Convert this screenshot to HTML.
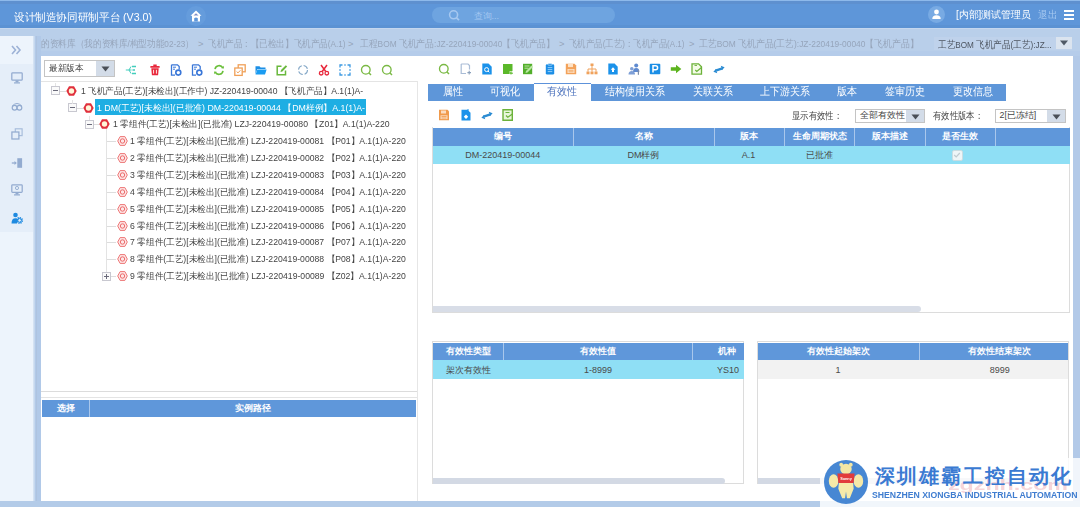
<!DOCTYPE html>
<html><head><meta charset="utf-8">
<style>
*{box-sizing:border-box;margin:0;padding:0}
html,body{width:1080px;height:507px;overflow:hidden;background:#b9cfea;font-family:"Liberation Sans",sans-serif;color:#333;position:relative}
.a{position:absolute}
.t{white-space:nowrap}
svg{position:absolute;overflow:visible;filter:blur(0.2px)}
</style></head><body>
<div class="a" style="left:0px;top:0px;width:1080px;height:28px;background:#5e96d9;"></div>
<div class="a" style="left:0px;top:0px;width:1080px;height:1px;background:#8db9eb;"></div>
<div class="a" style="left:0px;top:1px;width:1080px;height:2.5px;background:#5e90cf;"></div>
<div class="a" style="left:0px;top:25px;width:1080px;height:3.5px;background:#5b92d3;"></div>
<div class="a" style="left:186px;top:6px;width:20px;height:20px;background:#659cdc;border-radius:50%;"></div>
<svg style="left:189px;top:9px" width="14" height="14" viewBox="0 0 14 14"><path d="M7 1.5 L12.5 6.8 L11 6.8 L11 12.5 L3 12.5 L3 6.8 L1.5 6.8 Z" fill="#ffffff"/><path d="M5.2 12.5 L5.2 9.2 Q7 7.6 8.8 9.2 L8.8 12.5 Z" fill="#5e96d9"/><path d="M4.5 6.5 L7 4.2 L9.5 6.5 Z" fill="#7f8fc8"/></svg>
<div class="a" style="left:432px;top:7px;width:183px;height:16px;background:#6ea4e0;border-radius:8px;"></div>
<svg style="left:448px;top:9px" width="13" height="13" viewBox="0 0 13 13"><circle cx="5.6" cy="5.8" r="4" fill="none" stroke="#a6c8f0" stroke-width="1.6"/><path d="M8.6 8.8 L11 11.2" stroke="#a6c8f0" stroke-width="1.7"/></svg>
<div class="a" style="left:928px;top:6px;width:17px;height:17px;background:#78aae3;border-radius:50%;"></div>
<svg style="left:930px;top:8px" width="13" height="13" viewBox="0 0 13 13"><circle cx="6.5" cy="4" r="2.4" fill="#fff"/><path d="M2.3 11 Q2.3 7.3 6.5 7.3 Q10.7 7.3 10.7 11 Z" fill="#fff"/></svg>
<div class="a" style="left:1064px;top:10.2px;width:10px;height:1.8px;background:#ffffff;"></div>
<div class="a" style="left:1064px;top:14px;width:10px;height:1.8px;background:#ffffff;"></div>
<div class="a" style="left:1064px;top:17.8px;width:10px;height:1.8px;background:#ffffff;"></div>
<div class="a" style="left:0px;top:28px;width:1080px;height:1px;background:#c4d7ef;"></div>
<div class="a" style="left:36px;top:51px;width:1044px;height:5px;background:#b5ccea;"></div>
<div class="a" style="left:41px;top:55.5px;width:1032px;height:1px;background:#bac9de;"></div>
<div class="a" style="left:0px;top:36px;width:34px;height:465px;background:#e5eef9;"></div>
<div class="a" style="left:0px;top:36px;width:34px;height:28px;background:#edf4fc;"></div>
<div class="a" style="left:0px;top:232px;width:34px;height:269px;background:#edf4fc;"></div>
<div class="a" style="left:33px;top:36px;width:1px;height:465px;background:#d4e2f3;"></div>
<div class="a" style="left:34px;top:36px;width:7px;height:465px;background:#b1c9e8;"></div>
<div class="a" style="left:34px;top:36px;width:1px;height:465px;background:#c6d8ee;"></div>
<div class="a" style="left:35.5px;top:36px;width:1px;height:465px;background:#aec3df;"></div>
<div class="a" style="left:934px;top:36.5px;width:138px;height:13px;background:#bfd2eb;"></div>
<div class="a" style="left:1056px;top:37px;width:16px;height:12px;background:#dbe4ef;"></div>
<svg style="left:1059px;top:40px" width="10" height="6" viewBox="0 0 10 6"><path d="M1 0.5 L9 0.5 L5 5.5 Z" fill="#505a66"/></svg>
<div class="a" style="left:41px;top:56px;width:1032px;height:445px;background:#ffffff;"></div>
<div class="a" style="left:1073px;top:56px;width:7px;height:445px;background:#b2c9e8;"></div>
<div class="a" style="left:0px;top:501px;width:1080px;height:6px;background:#b3cbe8;"></div>
<div class="a" style="left:44px;top:60px;width:71px;height:17px;background:#ffffff;border:1px solid #c4c4c4;"></div>
<div class="a" style="left:96px;top:61px;width:18px;height:15px;background:#d3dce8;"></div>
<svg style="left:100.5px;top:65.5px" width="9" height="6" viewBox="0 0 9 6"><path d="M0.5 0.5 L8.5 0.5 L4.5 5.5 Z" fill="#4a4f57"/></svg>
<div class="a" style="left:41px;top:81px;width:377px;height:311px;background:#ffffff;border-top:1px solid #e4e4e4;border-bottom:1px solid #dcdcdc;"></div>
<div class="a" style="left:417px;top:81px;width:1px;height:420px;background:#e6e6e6;"></div>
<div class="a" style="left:41px;top:397px;width:376px;height:1px;background:#e4e4e4;"></div>
<div class="a" style="left:42px;top:400px;width:374px;height:17px;background:#5f97da;"></div>
<div class="a" style="left:89px;top:400px;width:1px;height:17px;background:#a9c7ec;"></div>
<div class="a" style="left:94.8px;top:99.2px;width:271px;height:16.3px;background:#1eaee3;"></div>
<svg style="left:51.00px;top:86.30px" width="9" height="9" viewBox="0 0 9 9"><rect x="0.5" y="0.5" width="8" height="8" fill="#fafafa" stroke="#c8c8d0" stroke-width="1"/><path d="M2 4.5 H7" stroke="#6a6a7a" stroke-width="1"/></svg>
<div class="a" style="left:55px;top:83px;width:1px;height:3px;background:#e3e3e3"></div>
<div class="a" style="left:60px;top:91px;width:6px;height:1px;background:#dddddd"></div>
<svg style="left:66.00px;top:85.80px" width="11" height="10" viewBox="0 0 11 10"><path d="M3 0.3 L8 0.3 L10.7 5 L8 9.7 L3 9.7 L0.3 5 Z" fill="#e0303c"/><circle cx="5.5" cy="5" r="2.7" fill="#fff6d8"/></svg>
<svg style="left:67.50px;top:103.14px" width="9" height="9" viewBox="0 0 9 9"><rect x="0.5" y="0.5" width="8" height="8" fill="#fafafa" stroke="#c8c8d0" stroke-width="1"/><path d="M2 4.5 H7" stroke="#6a6a7a" stroke-width="1"/></svg>
<div class="a" style="left:72px;top:100px;width:1px;height:4px;background:#e3e3e3"></div>
<div class="a" style="left:77px;top:108px;width:6px;height:1px;background:#dddddd"></div>
<svg style="left:82.50px;top:102.64px" width="11" height="10" viewBox="0 0 11 10"><path d="M3 0.3 L8 0.3 L10.7 5 L8 9.7 L3 9.7 L0.3 5 Z" fill="#e0303c"/><circle cx="5.5" cy="5" r="2.7" fill="#fff6d8"/></svg>
<svg style="left:85.00px;top:119.98px" width="9" height="9" viewBox="0 0 9 9"><rect x="0.5" y="0.5" width="8" height="8" fill="#fafafa" stroke="#c8c8d0" stroke-width="1"/><path d="M2 4.5 H7" stroke="#6a6a7a" stroke-width="1"/></svg>
<div class="a" style="left:89px;top:116px;width:1px;height:4px;background:#e3e3e3"></div>
<div class="a" style="left:94px;top:124px;width:6px;height:1px;background:#dddddd"></div>
<svg style="left:99.10px;top:119.48px" width="11" height="10" viewBox="0 0 11 10"><path d="M3 0.3 L8 0.3 L10.7 5 L8 9.7 L3 9.7 L0.3 5 Z" fill="#e0303c"/><circle cx="5.5" cy="5" r="2.7" fill="#fff6d8"/></svg>
<div class="a" style="left:106px;top:129px;width:1px;height:143px;background:#e3e3e3"></div>
<div class="a" style="left:107px;top:141px;width:9px;height:1px;background:#dddddd"></div>
<svg style="left:116.50px;top:136.32px" width="11" height="10" viewBox="0 0 11 10"><path d="M3.1 0.6 L7.9 0.6 L10.3 5 L7.9 9.4 L3.1 9.4 L0.7 5 Z" fill="#fde6e6" stroke="#ee7777" stroke-width="1"/><circle cx="5.5" cy="5" r="2.2" fill="none" stroke="#ec6a6a" stroke-width="1"/></svg>
<div class="a" style="left:107px;top:158px;width:9px;height:1px;background:#dddddd"></div>
<svg style="left:116.50px;top:153.16px" width="11" height="10" viewBox="0 0 11 10"><path d="M3.1 0.6 L7.9 0.6 L10.3 5 L7.9 9.4 L3.1 9.4 L0.7 5 Z" fill="#fde6e6" stroke="#ee7777" stroke-width="1"/><circle cx="5.5" cy="5" r="2.2" fill="none" stroke="#ec6a6a" stroke-width="1"/></svg>
<div class="a" style="left:107px;top:175px;width:9px;height:1px;background:#dddddd"></div>
<svg style="left:116.50px;top:170.00px" width="11" height="10" viewBox="0 0 11 10"><path d="M3.1 0.6 L7.9 0.6 L10.3 5 L7.9 9.4 L3.1 9.4 L0.7 5 Z" fill="#fde6e6" stroke="#ee7777" stroke-width="1"/><circle cx="5.5" cy="5" r="2.2" fill="none" stroke="#ec6a6a" stroke-width="1"/></svg>
<div class="a" style="left:107px;top:192px;width:9px;height:1px;background:#dddddd"></div>
<svg style="left:116.50px;top:186.84px" width="11" height="10" viewBox="0 0 11 10"><path d="M3.1 0.6 L7.9 0.6 L10.3 5 L7.9 9.4 L3.1 9.4 L0.7 5 Z" fill="#fde6e6" stroke="#ee7777" stroke-width="1"/><circle cx="5.5" cy="5" r="2.2" fill="none" stroke="#ec6a6a" stroke-width="1"/></svg>
<div class="a" style="left:107px;top:209px;width:9px;height:1px;background:#dddddd"></div>
<svg style="left:116.50px;top:203.68px" width="11" height="10" viewBox="0 0 11 10"><path d="M3.1 0.6 L7.9 0.6 L10.3 5 L7.9 9.4 L3.1 9.4 L0.7 5 Z" fill="#fde6e6" stroke="#ee7777" stroke-width="1"/><circle cx="5.5" cy="5" r="2.2" fill="none" stroke="#ec6a6a" stroke-width="1"/></svg>
<div class="a" style="left:107px;top:226px;width:9px;height:1px;background:#dddddd"></div>
<svg style="left:116.50px;top:220.52px" width="11" height="10" viewBox="0 0 11 10"><path d="M3.1 0.6 L7.9 0.6 L10.3 5 L7.9 9.4 L3.1 9.4 L0.7 5 Z" fill="#fde6e6" stroke="#ee7777" stroke-width="1"/><circle cx="5.5" cy="5" r="2.2" fill="none" stroke="#ec6a6a" stroke-width="1"/></svg>
<div class="a" style="left:107px;top:242px;width:9px;height:1px;background:#dddddd"></div>
<svg style="left:116.50px;top:237.36px" width="11" height="10" viewBox="0 0 11 10"><path d="M3.1 0.6 L7.9 0.6 L10.3 5 L7.9 9.4 L3.1 9.4 L0.7 5 Z" fill="#fde6e6" stroke="#ee7777" stroke-width="1"/><circle cx="5.5" cy="5" r="2.2" fill="none" stroke="#ec6a6a" stroke-width="1"/></svg>
<div class="a" style="left:107px;top:259px;width:9px;height:1px;background:#dddddd"></div>
<svg style="left:116.50px;top:254.20px" width="11" height="10" viewBox="0 0 11 10"><path d="M3.1 0.6 L7.9 0.6 L10.3 5 L7.9 9.4 L3.1 9.4 L0.7 5 Z" fill="#fde6e6" stroke="#ee7777" stroke-width="1"/><circle cx="5.5" cy="5" r="2.2" fill="none" stroke="#ec6a6a" stroke-width="1"/></svg>
<svg style="left:101.50px;top:271.54px" width="9" height="9" viewBox="0 0 9 9"><rect x="0.5" y="0.5" width="8" height="8" fill="#fafafa" stroke="#c8c8d0" stroke-width="1"/><path d="M2 4.5 H7" stroke="#6a6a7a" stroke-width="1"/><path d="M4.5 2 V7" stroke="#6a6a7a" stroke-width="1"/></svg>
<div class="a" style="left:111px;top:276px;width:5px;height:1px;background:#dddddd"></div>
<svg style="left:116.50px;top:271.04px" width="11" height="10" viewBox="0 0 11 10"><path d="M3.1 0.6 L7.9 0.6 L10.3 5 L7.9 9.4 L3.1 9.4 L0.7 5 Z" fill="#fde6e6" stroke="#ee7777" stroke-width="1"/><circle cx="5.5" cy="5" r="2.2" fill="none" stroke="#ec6a6a" stroke-width="1"/></svg>
<div class="a" style="left:428px;top:84px;width:577.5px;height:17px;background:#5e96d9;"></div>
<div class="a" style="left:534px;top:82.5px;width:57px;height:18.5px;background:#ffffff;border-top:1.5px solid #5d92da;"></div>
<div class="a" style="left:855px;top:109px;width:70px;height:14px;background:#ffffff;border:1px solid #c4c4c4;"></div>
<div class="a" style="left:906px;top:110px;width:18px;height:12px;background:#d3dce8;"></div>
<svg style="left:910.5px;top:113.5px" width="9" height="6" viewBox="0 0 9 6"><path d="M0.5 0.5 L8.5 0.5 L4.5 5.5 Z" fill="#4a4f57"/></svg>
<div class="a" style="left:995px;top:109px;width:71px;height:14px;background:#ffffff;border:1px solid #c4c4c4;"></div>
<div class="a" style="left:1047px;top:110px;width:18px;height:12px;background:#d3dce8;"></div>
<svg style="left:1051.5px;top:113.5px" width="9" height="6" viewBox="0 0 9 6"><path d="M0.5 0.5 L8.5 0.5 L4.5 5.5 Z" fill="#4a4f57"/></svg>
<div class="a" style="left:432px;top:127px;width:638px;height:186px;background:#ffffff;border:1px solid #dcdcdc;border-top:none;"></div>
<div class="a" style="left:432.5px;top:128px;width:637px;height:17.5px;background:#5f97da;"></div>
<div class="a" style="left:572.8px;top:128px;width:1px;height:17.5px;background:#a9c7ec;"></div>
<div class="a" style="left:713.5px;top:128px;width:1px;height:17.5px;background:#a9c7ec;"></div>
<div class="a" style="left:784.0px;top:128px;width:1px;height:17.5px;background:#a9c7ec;"></div>
<div class="a" style="left:854.3px;top:128px;width:1px;height:17.5px;background:#a9c7ec;"></div>
<div class="a" style="left:924.7px;top:128px;width:1px;height:17.5px;background:#a9c7ec;"></div>
<div class="a" style="left:995.1px;top:128px;width:1px;height:17.5px;background:#a9c7ec;"></div>
<div class="a" style="left:432.5px;top:145.5px;width:637px;height:18px;background:#8fdff5;"></div>
<div class="a" style="left:951.5px;top:149.5px;width:11px;height:11px;background:#eef5f7;border:1px solid #c9dde2;border-radius:2px;"></div>
<svg style="left:953px;top:151px" width="8" height="8" viewBox="0 0 8 8"><path d="M1.2 4 L3.2 6 L6.8 2" fill="none" stroke="#bfcbd0" stroke-width="1.2"/></svg>
<div class="a" style="left:432.5px;top:306.3px;width:488px;height:5.7px;background:#d8dde7;border-radius:0 3px 3px 0;"></div>
<div class="a" style="left:432px;top:341px;width:312px;height:143px;background:#ffffff;border:1px solid #dcdcdc;"></div>
<div class="a" style="left:432.5px;top:342.5px;width:311px;height:17.5px;background:#5f97da;"></div>
<div class="a" style="left:503px;top:342.5px;width:1px;height:17.5px;background:#a9c7ec;"></div>
<div class="a" style="left:692.3px;top:342.5px;width:1px;height:17.5px;background:#a9c7ec;"></div>
<div class="a" style="left:432.5px;top:360px;width:311px;height:18.8px;background:#8fdff5;"></div>
<div class="a" style="left:432.5px;top:477.5px;width:292px;height:6px;background:#d3d9e4;border-radius:0 3px 3px 0;"></div>
<div class="a" style="left:757px;top:341px;width:312px;height:143px;background:#ffffff;border:1px solid #dcdcdc;"></div>
<div class="a" style="left:757.5px;top:342.5px;width:310px;height:17.5px;background:#5f97da;"></div>
<div class="a" style="left:918.7px;top:342.5px;width:1px;height:17.5px;background:#a9c7ec;"></div>
<div class="a" style="left:757.5px;top:360px;width:310px;height:18.8px;background:#f2f2f2;"></div>
<div class="a" style="left:757.5px;top:477.5px;width:311px;height:6px;background:#d3d9e4;"></div>
<svg style="left:125.30px;top:63.80px" width="12" height="12" viewBox="0 0 12 12"><path d="M0.8 6 H4 M4 6 L6 2.5 M4 6 H6.5 M4 6 L6 9.5" stroke="#43cdbd" stroke-width="1" fill="none"/><path d="M7 2.5 H11 M7.5 6 H10 M7 9.5 H11" stroke="#43cdbd" stroke-width="1.4" fill="none"/></svg>
<svg style="left:149.30px;top:63.80px" width="12" height="12" viewBox="0 0 12 12"><rect x="4.3" y="0.5" width="3.4" height="1.8" fill="#e8283c"/><rect x="1.3" y="1.9" width="9.4" height="1.9" rx="0.5" fill="#e8283c"/><path d="M2.3 4.3 H9.7 L9.1 11.3 H2.9 Z" fill="#e8283c"/><rect x="4" y="5.8" width="1.1" height="3.8" fill="#ffd6d6"/><rect x="6.9" y="5.8" width="1.1" height="3.8" fill="#ffd6d6"/></svg>
<svg style="left:170.30px;top:63.80px" width="12" height="12" viewBox="0 0 12 12"><path d="M1.5 0.8 H7.5 L9.2 2.5 V5.5 M5 11.2 H1.5 V0.8" stroke="#3a77d8" stroke-width="1.3" fill="none"/><path d="M3 3.2 H6 M3 5.2 H5" stroke="#3a77d8" stroke-width="1"/><circle cx="8.3" cy="8.6" r="2.5" fill="#fff" stroke="#3a77d8" stroke-width="1.6"/></svg>
<svg style="left:191.10px;top:63.80px" width="12" height="12" viewBox="0 0 12 12"><path d="M1.5 0.8 H7.5 L9.2 2.5 V5.5 M5 11.2 H1.5 V0.8" stroke="#3a77d8" stroke-width="1.3" fill="none"/><path d="M3 3.2 H6 M3 5.2 H5" stroke="#3a77d8" stroke-width="1"/><circle cx="8.3" cy="8.6" r="2.5" fill="#fff" stroke="#3a77d8" stroke-width="1.6"/></svg>
<svg style="left:212.70px;top:63.80px" width="12" height="12" viewBox="0 0 12 12"><path d="M2 5.2 A4.2 4.2 0 0 1 9.8 3.8" stroke="#6abf3a" stroke-width="1.6" fill="none"/><path d="M10 6.8 A4.2 4.2 0 0 1 2.2 8.2" stroke="#6abf3a" stroke-width="1.6" fill="none"/><path d="M8.3 4.3 L11 4.6 L10.6 1.8 Z M3.7 7.7 L1 7.4 L1.4 10.2 Z" fill="#6abf3a"/></svg>
<svg style="left:233.50px;top:63.80px" width="12" height="12" viewBox="0 0 12 12"><rect x="4.2" y="0.8" width="7" height="7" fill="none" stroke="#f0a058" stroke-width="1.3"/><rect x="0.8" y="4" width="7.4" height="7.4" fill="#fff" stroke="#f0a058" stroke-width="1.3"/><path d="M2.6 7.5 L4 8.9 L6.4 6.3" stroke="#f0a058" stroke-width="1" fill="none"/></svg>
<svg style="left:255.10px;top:63.80px" width="12" height="12" viewBox="0 0 12 12"><path d="M0.5 2.3 H4.5 L5.6 3.5 H10.5 V5 H2.3 L0.5 10.5 Z" fill="#1c8fe6"/><path d="M2.4 5.6 H11.6 L10 10.6 H0.6 Z" fill="#1a9cf2"/></svg>
<svg style="left:276.00px;top:63.80px" width="12" height="12" viewBox="0 0 12 12"><path d="M9.5 6.5 V10.8 H1.2 V2.2 H5.5" stroke="#69b83c" stroke-width="1.5" fill="none"/><path d="M4.5 8 L5 6 L9.8 1.2 L11.2 2.6 L6.4 7.4 Z" fill="#69b83c"/></svg>
<svg style="left:297.00px;top:63.80px" width="12" height="12" viewBox="0 0 12 12"><circle cx="6" cy="6" r="4.5" fill="none" stroke="#86a9c8" stroke-width="1.1" stroke-dasharray="5.2 1.9"/></svg>
<svg style="left:318.30px;top:63.80px" width="12" height="12" viewBox="0 0 12 12"><path d="M3 1 L7.6 7.3 M9 1 L4.4 7.3" stroke="#e8283c" stroke-width="1.5"/><circle cx="3.2" cy="9.2" r="1.8" fill="none" stroke="#e8283c" stroke-width="1.3"/><circle cx="8.8" cy="9.2" r="1.8" fill="none" stroke="#e8283c" stroke-width="1.3"/></svg>
<svg style="left:339.00px;top:63.80px" width="12" height="12" viewBox="0 0 12 12"><path d="M1 3.5 V1 H3.5 M8.5 1 H11 V3.5 M11 8.5 V11 H8.5 M3.5 11 H1 V8.5" stroke="#3d9ae2" stroke-width="1.3" fill="none"/><path d="M5 1 H7 M5 11 H7 M1 5 V7 M11 5 V7" stroke="#3d9ae2" stroke-width="1.1"/></svg>
<svg style="left:359.60px;top:63.80px" width="12" height="12" viewBox="0 0 12 12"><circle cx="5.8" cy="5.8" r="4.3" fill="none" stroke="#7ab944" stroke-width="1.35"/><path d="M8.8 8.8 L11 11" stroke="#7ab944" stroke-width="1.5"/></svg>
<svg style="left:380.80px;top:63.80px" width="12" height="12" viewBox="0 0 12 12"><circle cx="5.8" cy="5.8" r="4.3" fill="none" stroke="#7ab944" stroke-width="1.35"/><path d="M8.8 8.8 L11 11" stroke="#7ab944" stroke-width="1.5"/></svg>
<svg style="left:438.00px;top:62.70px" width="12" height="12" viewBox="0 0 12 12"><circle cx="5.8" cy="5.8" r="4.3" fill="none" stroke="#7ab944" stroke-width="1.35"/><path d="M8.8 8.8 L11 11" stroke="#7ab944" stroke-width="1.5"/></svg>
<svg style="left:459.60px;top:62.70px" width="12" height="12" viewBox="0 0 12 12"><path d="M1.2 1 H8 L9.5 2.5 V6.5 M1.2 1 V10.5 H6" stroke="#a9bcd6" stroke-width="1.2" fill="none"/><path d="M9.2 7.8 V11.5 M7.4 9.6 H11" stroke="#8aa0bb" stroke-width="1.1"/></svg>
<svg style="left:480.70px;top:62.70px" width="12" height="12" viewBox="0 0 12 12"><path d="M1.3 0.5 H7.5 L10.7 3.7 V11.5 H1.3 Z" fill="#1b92ea"/><circle cx="5.6" cy="6.6" r="2" fill="none" stroke="#fff" stroke-width="1"/><path d="M7 8 L8.3 9.3" stroke="#fff" stroke-width="1"/></svg>
<svg style="left:501.80px;top:62.70px" width="12" height="12" viewBox="0 0 12 12"><path d="M1 1 H10.5 V7.8 L7.3 11 H1 Z" fill="#5bb82a"/><path d="M7.5 11 V8 H10.5" fill="#c8eab0"/><path d="M9 9 V11.5 M7.8 10.2 H11" stroke="#5bb82a" stroke-width="1"/></svg>
<svg style="left:521.80px;top:62.70px" width="12" height="12" viewBox="0 0 12 12"><path d="M1 0.8 H10.2 V11.2 H1 Z" fill="#52ae2a"/><path d="M2.5 3 H7.5 M2.5 5.2 H6.5" stroke="#c8eab0" stroke-width="0.9"/><path d="M3.5 10 L4 8 L9.5 2.5 L11 4 L5.5 9.5 Z" fill="#b8e6a0"/></svg>
<svg style="left:543.70px;top:62.70px" width="12" height="12" viewBox="0 0 12 12"><rect x="1.8" y="1.2" width="8.4" height="10.3" rx="1.3" fill="#1b8ee6"/><rect x="4" y="0.4" width="4" height="1.8" rx="0.6" fill="#1b8ee6" stroke="#fff" stroke-width="0.5"/><path d="M3.7 4.6 H8.3 M3.7 6.6 H8.3 M3.7 8.6 H8.3" stroke="#9dd2fa" stroke-width="0.9"/></svg>
<svg style="left:564.70px;top:62.70px" width="12" height="12" viewBox="0 0 12 12"><path d="M0.8 0.8 H9.5 L11.2 2.5 V11.2 H0.8 Z" fill="#f3a25a"/><rect x="3" y="0.8" width="5" height="3.3" fill="#fde2c6"/><rect x="2.5" y="6" width="7" height="4" fill="#fde2c6"/><path d="M3.5 7.3 H8.5 M3.5 8.8 H8.5" stroke="#f3a25a" stroke-width="0.8"/></svg>
<svg style="left:586.10px;top:62.70px" width="12" height="12" viewBox="0 0 12 12"><rect x="4.5" y="0.5" width="3" height="2.5" fill="#f0a25c"/><path d="M6 3 V6 M2 8.5 V6 H10 V8.5 M6 6 V8.5" stroke="#f0a25c" stroke-width="1" fill="none"/><rect x="0.5" y="8.5" width="3" height="2.8" fill="#f0a25c"/><rect x="4.5" y="8.5" width="3" height="2.8" fill="#f0a25c"/><rect x="8.5" y="8.5" width="3" height="2.8" fill="#f0a25c"/></svg>
<svg style="left:606.90px;top:62.70px" width="12" height="12" viewBox="0 0 12 12"><path d="M1.3 0.6 H7.6 L10.7 3.7 V11.4 H1.3 Z" fill="#1b92ea"/><path d="M6 4.3 L8.3 6.8 H7 V9 H5 V6.8 H3.7 Z" fill="#fff"/></svg>
<svg style="left:628.00px;top:62.70px" width="12" height="12" viewBox="0 0 12 12"><circle cx="8.2" cy="2.6" r="2" fill="#5f8ad0"/><path d="M5 9 Q5 5 8.2 5 Q11.4 5 11.4 9 Z" fill="#5f8ad0"/><circle cx="3.8" cy="5.8" r="1.8" fill="#7e9fd6"/><path d="M0.5 11.5 Q0.5 8 3.8 8 Q7 8 7 11.5 Z" fill="#7e9fd6"/><rect x="9.8" y="7" width="1.2" height="4.8" fill="#7e8ea8"/></svg>
<svg style="left:648.80px;top:62.70px" width="12" height="12" viewBox="0 0 12 12"><rect x="0.7" y="0.7" width="10.6" height="10.6" rx="1" fill="#1b8ee6"/><path d="M4 9.5 V2.8 H6.6 Q8.6 2.8 8.6 4.8 Q8.6 6.8 6.6 6.8 H4" stroke="#fff" stroke-width="1.5" fill="none"/></svg>
<svg style="left:670.30px;top:62.70px" width="12" height="12" viewBox="0 0 12 12"><path d="M0.8 4.3 H6 V1.8 L11.3 6 L6 10.2 V7.7 H0.8 Z" fill="#5cb41e"/></svg>
<svg style="left:691.00px;top:62.70px" width="12" height="12" viewBox="0 0 12 12"><path d="M1 0.8 H7.6 L10.5 3.7 V11.2 H1 Z" fill="#f4fbe8" stroke="#6cb23a" stroke-width="1.3"/><path d="M3.5 2.5 H6" stroke="#6cb23a" stroke-width="0.9"/><path d="M4.3 7 L5.8 8.4 L10.8 4.2" stroke="#6cb23a" stroke-width="1.3" fill="none"/></svg>
<svg style="left:712.50px;top:62.70px" width="12" height="12" viewBox="0 0 12 12"><path d="M2.5 7.3 L8.5 5.3" stroke="#2a8bd2" stroke-width="1.7"/><path d="M7.8 2.8 L11.6 4.2 L8.9 7.3 Z" fill="#2a8bd2"/><path d="M9.5 5.7 L3.5 7.7" stroke="#2a8bd2" stroke-width="1.7"/><path d="M4.2 10.2 L0.4 8.8 L3.1 5.7 Z" fill="#2a8bd2"/></svg>
<svg style="left:438.40px;top:109.30px" width="12" height="12" viewBox="0 0 12 12"><path d="M1 0.8 H9.5 L11 2.3 V11.2 H1 Z" fill="#f09a4c"/><rect x="3" y="1.5" width="5" height="3" fill="#fcdcc0"/><rect x="2.5" y="6.3" width="7" height="3.8" fill="#fcdcc0"/><path d="M3.5 7.5 H8.5 M3.5 9 H8.5" stroke="#f09a4c" stroke-width="0.8"/></svg>
<svg style="left:459.90px;top:109.30px" width="12" height="12" viewBox="0 0 12 12"><path d="M1.5 0.8 H7.5 L10.5 3.8 V11.5 H1.5 Z" fill="#1b92ea"/><path d="M8 0 V2.8" stroke="#1b92ea" stroke-width="1"/><path d="M6 5.5 L8.2 7.7 L6 9.9 L3.8 7.7 Z" fill="#fff"/></svg>
<svg style="left:480.50px;top:109.30px" width="12" height="12" viewBox="0 0 12 12"><path d="M2.5 7.3 L8.5 5.3" stroke="#2a8bd2" stroke-width="1.7"/><path d="M7.8 2.8 L11.6 4.2 L8.9 7.3 Z" fill="#2a8bd2"/><path d="M9.5 5.7 L3.5 7.7" stroke="#2a8bd2" stroke-width="1.7"/><path d="M4.2 10.2 L0.4 8.8 L3.1 5.7 Z" fill="#2a8bd2"/></svg>
<svg style="left:502.00px;top:109.30px" width="12" height="12" viewBox="0 0 12 12"><path d="M1 0.8 H10.3 V11.2 H1 Z" fill="#e8f7da" stroke="#6cb23a" stroke-width="1.4"/><path d="M3.5 3.5 H7.5" stroke="#6cb23a" stroke-width="1"/><path d="M4 6.6 L5.8 8.2 L10.8 4.8" stroke="#6cb23a" stroke-width="1.3" fill="none"/></svg>
<svg style="left:10px;top:45px" width="12" height="10" viewBox="0 0 12 10"><path d="M2 1 L5.5 5 L2 9 M6.5 1 L10 5 L6.5 9" stroke="#9db2d6" stroke-width="1.6" fill="none"/></svg>
<svg style="left:10.60px;top:71.80px" width="12" height="12" viewBox="0 0 12 12"><rect x="0.8" y="0.8" width="10.4" height="7.4" rx="0.8" fill="none" stroke="#93abd0" stroke-width="1.25"/><rect x="4.5" y="8.4" width="3" height="2" fill="#93abd0"/><rect x="3" y="10.3" width="6" height="1.2" fill="#93abd0"/></svg>
<svg style="left:10.60px;top:100.00px" width="12" height="12" viewBox="0 0 12 12"><path d="M1.2 6 Q6 1 10.8 6" stroke="#93abd0" stroke-width="1" fill="none"/><circle cx="3.6" cy="7.8" r="2.4" fill="none" stroke="#93abd0" stroke-width="1.2"/><circle cx="8.4" cy="7.8" r="2.4" fill="none" stroke="#93abd0" stroke-width="1.2"/></svg>
<svg style="left:10.60px;top:128.00px" width="12" height="12" viewBox="0 0 12 12"><rect x="4.3" y="0.8" width="6.8" height="6.8" fill="none" stroke="#a9bedc" stroke-width="1.2"/><rect x="0.9" y="4" width="7" height="7" fill="#e5eef9" stroke="#93abd0" stroke-width="1.25"/></svg>
<svg style="left:10.60px;top:157.00px" width="12" height="12" viewBox="0 0 12 12"><rect x="6.3" y="1.2" width="4.8" height="9.6" fill="#93abd0"/><path d="M0.8 6 H4.5" stroke="#93abd0" stroke-width="1.3"/><path d="M3.5 4 L5.8 6 L3.5 8 Z" fill="#93abd0"/></svg>
<svg style="left:10.60px;top:184.30px" width="12" height="12" viewBox="0 0 12 12"><rect x="0.8" y="0.8" width="10.4" height="7.6" rx="0.8" fill="none" stroke="#93abd0" stroke-width="1.25"/><circle cx="6" cy="4" r="1.6" fill="none" stroke="#93abd0" stroke-width="0.9"/><rect x="4.5" y="8.5" width="3" height="2" fill="#93abd0"/><rect x="3" y="10.3" width="6" height="1.2" fill="#93abd0"/></svg>
<svg style="left:10.60px;top:212.00px" width="12" height="12" viewBox="0 0 12 12"><circle cx="4.5" cy="3" r="2.3" fill="#1f8ae0"/><path d="M0.5 11.5 Q0.5 6.3 4.5 6.3 Q6.5 6.3 7 7.5 L6 11.5 Z" fill="#1f8ae0"/><circle cx="8.6" cy="8.4" r="2.6" fill="none" stroke="#1f8ae0" stroke-width="1.8" stroke-dasharray="1.2 0.8"/><circle cx="8.6" cy="8.4" r="1.8" fill="none" stroke="#1f8ae0" stroke-width="1"/></svg>
<div class="a" style="left:820px;top:457.5px;width:260px;height:49.5px;background:rgba(255,255,255,0.82);"></div>
<svg style="left:823.5px;top:460px" width="44" height="44" viewBox="0 0 46 46">
<circle cx="23" cy="23" r="23" fill="#4787d3"/>
<ellipse cx="23" cy="9.5" rx="6" ry="5.5" fill="#f3e6a4"/>
<circle cx="18" cy="5" r="2" fill="#f3e6a4"/><circle cx="28" cy="5" r="2" fill="#f3e6a4"/>
<ellipse cx="10" cy="22" rx="5" ry="7" fill="#f6e9a8"/>
<ellipse cx="36" cy="22" rx="5" ry="7" fill="#f6e9a8"/>
<path d="M14 14 H32 L31 24 H15 Z" fill="#e23b3b"/>
<path d="M15.5 24 H30.5 L31 30 L27 40 H24 L23 33 L22 40 H19 L15 30 Z" fill="#f6eaa9"/>
<text x="23" y="20.5" font-size="4" fill="#fff" text-anchor="middle" font-family="Liberation Sans" font-weight="700">Sunny</text>
</svg>
<div class="a t" id="t0" style="left:14.00px;top:5.50px;height:22.00px;line-height:22.00px;font-size:11px;color:#ffffff;font-weight:500;transform:scaleX(0.9649);transform-origin:0 0;">设计制造协同研制平台 (V3.0)</div>
<div class="a t" id="t1" style="left:473.50px;top:6.50px;height:18.00px;line-height:18.00px;font-size:9px;color:#a3c7f1;font-weight:400;">查询...</div>
<div class="a t" id="t2" style="left:955.50px;top:5.00px;height:20.00px;line-height:20.00px;font-size:10px;color:#ffffff;font-weight:400;transform:scaleX(0.9926);transform-origin:0 0;">[内部]测试管理员</div>
<div class="a t" id="t3" style="left:1038.00px;top:5.00px;height:20.00px;line-height:20.00px;font-size:10px;color:#a8caf1;font-weight:400;transform:scaleX(0.9500);transform-origin:0 0;">退出</div>
<div class="a t" id="t4" style="left:41.00px;top:33.60px;height:19.00px;line-height:19.00px;font-size:9.5px;color:#96a5bb;font-weight:400;transform:scaleX(0.8647);transform-origin:0 0;">的资料库（我的资料库/构型功能02-23）</div>
<div class="a t" id="t5" style="left:198.00px;top:33.60px;height:19.00px;line-height:19.00px;font-size:9.5px;color:#96a5bb;font-weight:400;">&gt;</div>
<div class="a t" id="t6" style="left:207.50px;top:33.60px;height:19.00px;line-height:19.00px;font-size:9.5px;color:#96a5bb;font-weight:400;transform:scaleX(0.8562);transform-origin:0 0;">飞机产品：【已检出】飞机产品(A.1)</div>
<div class="a t" id="t7" style="left:348.00px;top:33.60px;height:19.00px;line-height:19.00px;font-size:9.5px;color:#96a5bb;font-weight:400;">&gt;</div>
<div class="a t" id="t8" style="left:360.00px;top:33.60px;height:19.00px;line-height:19.00px;font-size:9.5px;color:#96a5bb;font-weight:400;transform:scaleX(0.8787);transform-origin:0 0;">工程BOM 飞机产品:JZ-220419-00040【飞机产品】</div>
<div class="a t" id="t9" style="left:559.00px;top:33.60px;height:19.00px;line-height:19.00px;font-size:9.5px;color:#96a5bb;font-weight:400;">&gt;</div>
<div class="a t" id="t10" style="left:568.50px;top:33.60px;height:19.00px;line-height:19.00px;font-size:9.5px;color:#96a5bb;font-weight:400;transform:scaleX(0.8435);transform-origin:0 0;">飞机产品(工艺)：飞机产品(A.1)</div>
<div class="a t" id="t11" style="left:689.00px;top:33.60px;height:19.00px;line-height:19.00px;font-size:9.5px;color:#96a5bb;font-weight:400;">&gt;</div>
<div class="a t" id="t12" style="left:698.50px;top:33.60px;height:19.00px;line-height:19.00px;font-size:9.5px;color:#96a5bb;font-weight:400;transform:scaleX(0.8842);transform-origin:0 0;">工艺BOM 飞机产品(工艺):JZ-220419-00040【飞机产品】</div>
<div class="a t" id="t13" style="left:937.50px;top:34.50px;height:19.00px;line-height:19.00px;font-size:9.5px;color:#4d5560;font-weight:400;transform:scaleX(0.8617);transform-origin:0 0;">工艺BOM 飞机产品(工艺):JZ...</div>
<div class="a t" id="t14" style="left:49.00px;top:59.70px;height:17.60px;line-height:17.60px;font-size:8.8px;color:#444444;font-weight:400;transform:scaleX(0.9583);transform-origin:0 0;">最新版本</div>
<div class="a t" id="t15" style="left:57.40px;top:399.90px;height:17.20px;line-height:17.20px;font-size:8.6px;color:#ffffff;font-weight:700;">选择</div>
<div class="a t" id="t16" style="left:235.00px;top:399.90px;height:17.20px;line-height:17.20px;font-size:8.6px;color:#ffffff;font-weight:700;">实例路径</div>
<div class="a t" id="t17" style="left:80.80px;top:81.80px;height:18.00px;line-height:18.00px;font-size:9px;color:#444444;font-weight:400;transform:scaleX(0.9532);transform-origin:0 0;">1 飞机产品(工艺)[未检出](工作中) JZ-220419-00040 【飞机产品】A.1(1)A-</div>
<div class="a t" id="t18" style="left:97.00px;top:98.64px;height:18.00px;line-height:18.00px;font-size:9px;color:#ffffff;font-weight:400;transform:scaleX(0.9779);transform-origin:0 0;">1 DM(工艺)[未检出](已批准) DM-220419-00044 【DM样例】A.1(1)A-</div>
<div class="a t" id="t19" style="left:113.00px;top:115.48px;height:18.00px;line-height:18.00px;font-size:9px;color:#444444;font-weight:400;transform:scaleX(0.9651);transform-origin:0 0;">1 零组件(工艺)[未检出](已批准) LZJ-220419-00080 【Z01】A.1(1)A-220</div>
<div class="a t" id="t20" style="left:129.80px;top:132.32px;height:18.00px;line-height:18.00px;font-size:9px;color:#444444;font-weight:400;transform:scaleX(0.9607);transform-origin:0 0;">1 零组件(工艺)[未检出](已批准) LZJ-220419-00081 【P01】A.1(1)A-220</div>
<div class="a t" id="t21" style="left:129.80px;top:149.16px;height:18.00px;line-height:18.00px;font-size:9px;color:#444444;font-weight:400;transform:scaleX(0.9607);transform-origin:0 0;">2 零组件(工艺)[未检出](已批准) LZJ-220419-00082 【P02】A.1(1)A-220</div>
<div class="a t" id="t22" style="left:129.80px;top:166.00px;height:18.00px;line-height:18.00px;font-size:9px;color:#444444;font-weight:400;transform:scaleX(0.9607);transform-origin:0 0;">3 零组件(工艺)[未检出](已批准) LZJ-220419-00083 【P03】A.1(1)A-220</div>
<div class="a t" id="t23" style="left:129.80px;top:182.84px;height:18.00px;line-height:18.00px;font-size:9px;color:#444444;font-weight:400;transform:scaleX(0.9607);transform-origin:0 0;">4 零组件(工艺)[未检出](已批准) LZJ-220419-00084 【P04】A.1(1)A-220</div>
<div class="a t" id="t24" style="left:129.80px;top:199.68px;height:18.00px;line-height:18.00px;font-size:9px;color:#444444;font-weight:400;transform:scaleX(0.9607);transform-origin:0 0;">5 零组件(工艺)[未检出](已批准) LZJ-220419-00085 【P05】A.1(1)A-220</div>
<div class="a t" id="t25" style="left:129.80px;top:216.52px;height:18.00px;line-height:18.00px;font-size:9px;color:#444444;font-weight:400;transform:scaleX(0.9607);transform-origin:0 0;">6 零组件(工艺)[未检出](已批准) LZJ-220419-00086 【P06】A.1(1)A-220</div>
<div class="a t" id="t26" style="left:129.80px;top:233.36px;height:18.00px;line-height:18.00px;font-size:9px;color:#444444;font-weight:400;transform:scaleX(0.9607);transform-origin:0 0;">7 零组件(工艺)[未检出](已批准) LZJ-220419-00087 【P07】A.1(1)A-220</div>
<div class="a t" id="t27" style="left:129.80px;top:250.20px;height:18.00px;line-height:18.00px;font-size:9px;color:#444444;font-weight:400;transform:scaleX(0.9607);transform-origin:0 0;">8 零组件(工艺)[未检出](已批准) LZJ-220419-00088 【P08】A.1(1)A-220</div>
<div class="a t" id="t28" style="left:129.80px;top:267.04px;height:18.00px;line-height:18.00px;font-size:9px;color:#444444;font-weight:400;transform:scaleX(0.9623);transform-origin:0 0;">9 零组件(工艺)[未检出](已批准) LZJ-220419-00089 【Z02】A.1(1)A-220</div>
<div class="a t" id="t29" style="left:442.80px;top:80.30px;height:22.00px;line-height:22.00px;font-size:11px;color:#ffffff;font-weight:400;transform:scaleX(0.9091);transform-origin:0 0;">属性</div>
<div class="a t" id="t30" style="left:489.70px;top:80.30px;height:22.00px;line-height:22.00px;font-size:11px;color:#ffffff;font-weight:400;transform:scaleX(0.9091);transform-origin:0 0;">可视化</div>
<div class="a t" id="t31" style="left:547.00px;top:80.30px;height:22.00px;line-height:22.00px;font-size:11px;color:#4b72bd;font-weight:400;transform:scaleX(0.9091);transform-origin:0 0;">有效性</div>
<div class="a t" id="t32" style="left:605.00px;top:80.30px;height:22.00px;line-height:22.00px;font-size:11px;color:#ffffff;font-weight:400;transform:scaleX(0.9091);transform-origin:0 0;">结构使用关系</div>
<div class="a t" id="t33" style="left:692.50px;top:80.30px;height:22.00px;line-height:22.00px;font-size:11px;color:#ffffff;font-weight:400;transform:scaleX(0.9091);transform-origin:0 0;">关联关系</div>
<div class="a t" id="t34" style="left:759.50px;top:80.30px;height:22.00px;line-height:22.00px;font-size:11px;color:#ffffff;font-weight:400;transform:scaleX(0.9091);transform-origin:0 0;">上下游关系</div>
<div class="a t" id="t35" style="left:837.00px;top:80.30px;height:22.00px;line-height:22.00px;font-size:11px;color:#ffffff;font-weight:400;transform:scaleX(0.9091);transform-origin:0 0;">版本</div>
<div class="a t" id="t36" style="left:884.80px;top:80.30px;height:22.00px;line-height:22.00px;font-size:11px;color:#ffffff;font-weight:400;transform:scaleX(0.9091);transform-origin:0 0;">签审历史</div>
<div class="a t" id="t37" style="left:952.70px;top:80.30px;height:22.00px;line-height:22.00px;font-size:11px;color:#ffffff;font-weight:400;transform:scaleX(0.9091);transform-origin:0 0;">更改信息</div>
<div class="a t" id="t38" style="left:792.00px;top:106.00px;height:19.00px;line-height:19.00px;font-size:9.5px;color:#454545;font-weight:400;transform:scaleX(0.8333);transform-origin:0 0;">显示有效性：</div>
<div class="a t" id="t39" style="left:859.50px;top:107.40px;height:17.20px;line-height:17.20px;font-size:8.6px;color:#444444;font-weight:400;">全部有效性</div>
<div class="a t" id="t40" style="left:933.00px;top:106.00px;height:19.00px;line-height:19.00px;font-size:9.5px;color:#454545;font-weight:400;transform:scaleX(0.8333);transform-origin:0 0;">有效性版本：</div>
<div class="a t" id="t41" style="left:999.50px;top:107.20px;height:17.60px;line-height:17.60px;font-size:8.8px;color:#444444;font-weight:400;">2[已冻结]</div>
<div class="a t" id="t42" style="left:494.30px;top:128.20px;height:17.20px;line-height:17.20px;font-size:8.6px;color:#ffffff;font-weight:700;">编号</div>
<div class="a t" id="t43" style="left:634.60px;top:128.20px;height:17.20px;line-height:17.20px;font-size:8.6px;color:#ffffff;font-weight:700;">名称</div>
<div class="a t" id="t44" style="left:739.60px;top:128.20px;height:17.20px;line-height:17.20px;font-size:8.6px;color:#ffffff;font-weight:700;">版本</div>
<div class="a t" id="t45" style="left:792.60px;top:128.20px;height:17.20px;line-height:17.20px;font-size:8.6px;color:#ffffff;font-weight:700;">生命周期状态</div>
<div class="a t" id="t46" style="left:872.00px;top:128.20px;height:17.20px;line-height:17.20px;font-size:8.6px;color:#ffffff;font-weight:700;">版本描述</div>
<div class="a t" id="t47" style="left:942.40px;top:128.20px;height:17.20px;line-height:17.20px;font-size:8.6px;color:#ffffff;font-weight:700;">是否生效</div>
<div class="a t" id="t48" style="left:465.27px;top:145.50px;height:18.00px;line-height:18.00px;font-size:9px;color:#4a4a4a;font-weight:400;">DM-220419-00044</div>
<div class="a t" id="t49" style="left:627.50px;top:145.50px;height:18.00px;line-height:18.00px;font-size:9px;color:#4a4a4a;font-weight:400;">DM样例</div>
<div class="a t" id="t50" style="left:741.84px;top:145.50px;height:18.00px;line-height:18.00px;font-size:9px;color:#4a4a4a;font-weight:400;">A.1</div>
<div class="a t" id="t51" style="left:806.10px;top:145.50px;height:18.00px;line-height:18.00px;font-size:9px;color:#4a4a4a;font-weight:400;">已批准</div>
<div class="a t" id="t52" style="left:445.50px;top:342.90px;height:17.20px;line-height:17.20px;font-size:8.6px;color:#ffffff;font-weight:700;">有效性类型</div>
<div class="a t" id="t53" style="left:580.20px;top:342.90px;height:17.20px;line-height:17.20px;font-size:8.6px;color:#ffffff;font-weight:700;">有效性值</div>
<div class="a t" id="t54" style="left:718.00px;top:342.90px;height:17.20px;line-height:17.20px;font-size:8.6px;color:#ffffff;font-weight:700;">机种</div>
<div class="a t" id="t55" style="left:445.50px;top:360.50px;height:18.00px;line-height:18.00px;font-size:9px;color:#4a4a4a;font-weight:400;">架次有效性</div>
<div class="a t" id="t56" style="left:583.98px;top:360.50px;height:18.00px;line-height:18.00px;font-size:9px;color:#4a4a4a;font-weight:400;">1-8999</div>
<div class="a t" id="t57" style="left:716.98px;top:360.50px;height:18.00px;line-height:18.00px;font-size:9px;color:#4a4a4a;font-weight:400;">YS10</div>
<div class="a t" id="t58" style="left:807.30px;top:342.90px;height:17.20px;line-height:17.20px;font-size:8.6px;color:#ffffff;font-weight:700;">有效性起始架次</div>
<div class="a t" id="t59" style="left:968.20px;top:342.90px;height:17.20px;line-height:17.20px;font-size:8.6px;color:#ffffff;font-weight:700;">有效性结束架次</div>
<div class="a t" id="t60" style="left:835.49px;top:360.50px;height:18.00px;line-height:18.00px;font-size:9px;color:#4a4a4a;font-weight:400;">1</div>
<div class="a t" id="t61" style="left:989.68px;top:360.50px;height:18.00px;line-height:18.00px;font-size:9px;color:#4a4a4a;font-weight:400;">8999</div>
<div class="a t" id="t62" style="left:948.00px;top:470.00px;height:30.00px;line-height:30.00px;font-size:15px;color:rgba(232,150,160,0.4);font-weight:700;transform:scaleX(1.5484);transform-origin:0 0;">zgzhh.com</div>
<div class="a t" id="t63" style="left:875.00px;top:456.30px;height:40.00px;line-height:40.00px;font-size:20px;color:#3a7ad2;font-weight:700;letter-spacing:2px;">深圳雄霸工控自动化</div>
<div class="a t" id="t64" style="left:872.00px;top:485.70px;height:18.60px;line-height:18.60px;font-size:9.3px;color:#3f7dd0;font-weight:700;transform:scaleX(0.9347);transform-origin:0 0;">SHENZHEN XIONGBA INDUSTRIAL AUTOMATION</div>
</body></html>
